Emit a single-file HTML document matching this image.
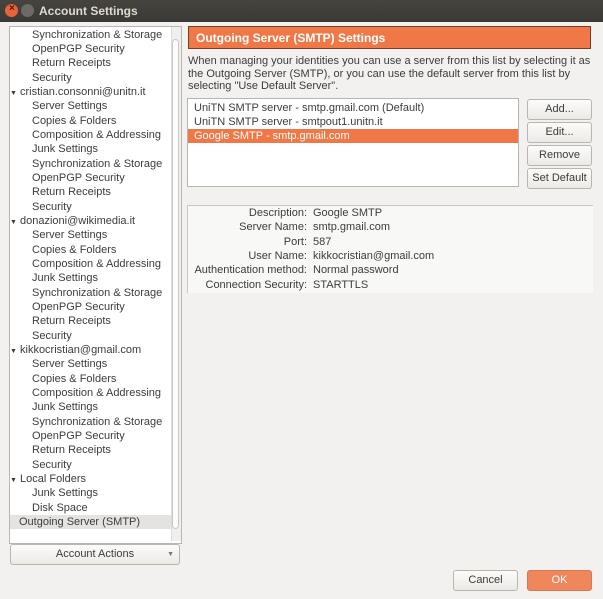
<!DOCTYPE html>
<html><head><style>
body{margin:0;width:603px;height:599px;background:#f2f1f0;font-family:"Liberation Sans",sans-serif;font-size:11px;color:#3c3c3c;position:relative;overflow:hidden}
.a{position:absolute}
#tb{left:0;top:0;width:603px;height:22px;background:linear-gradient(#45443f,#3a3935);color:#dfdbd2;font-weight:bold;font-size:12px}
#tree{left:9px;top:26px;width:171px;height:516px;background:#fff;border:1px solid #b8b6b2;overflow:hidden}
.r{position:absolute;height:14px;line-height:14px;white-space:nowrap}
.btn{position:absolute;border:1px solid #b9b6b0;border-radius:3px;background:linear-gradient(#fbfbfa,#eceae7);text-align:center;line-height:19px;height:19px;color:#3c3c3c}
.dl{position:absolute;right:296px;white-space:nowrap}
.dv{position:absolute;left:313px;white-space:nowrap}
</style></head><body>
<div class="a" id="tb">
<div class="a" style="left:5px;top:4px;width:13px;height:13px;border-radius:50%;background:#e9633a"></div>
<div class="a" style="left:9px;top:3px;color:#4a2010;font-size:10px">×</div>
<div class="a" style="left:21px;top:4px;width:13px;height:13px;border-radius:50%;background:#6b6a65"></div>
<div class="a" style="left:39px;top:4px">Account Settings</div>
</div>
<div class="a" id="tree">
<div class="r" style="left:22px;top:1px">Synchronization &amp; Storage</div>
<div class="r" style="left:22px;top:15px">OpenPGP Security</div>
<div class="r" style="left:22px;top:29px">Return Receipts</div>
<div class="r" style="left:22px;top:44px">Security</div>
<div class="r" style="left:0px;top:58px"><span style="font-size:7px">▼</span> cristian.consonni@unitn.it</div>
<div class="r" style="left:22px;top:72px">Server Settings</div>
<div class="r" style="left:22px;top:87px">Copies &amp; Folders</div>
<div class="r" style="left:22px;top:101px">Composition &amp; Addressing</div>
<div class="r" style="left:22px;top:115px">Junk Settings</div>
<div class="r" style="left:22px;top:130px">Synchronization &amp; Storage</div>
<div class="r" style="left:22px;top:144px">OpenPGP Security</div>
<div class="r" style="left:22px;top:158px">Return Receipts</div>
<div class="r" style="left:22px;top:173px">Security</div>
<div class="r" style="left:0px;top:187px"><span style="font-size:7px">▼</span> donazioni@wikimedia.it</div>
<div class="r" style="left:22px;top:201px">Server Settings</div>
<div class="r" style="left:22px;top:216px">Copies &amp; Folders</div>
<div class="r" style="left:22px;top:230px">Composition &amp; Addressing</div>
<div class="r" style="left:22px;top:244px">Junk Settings</div>
<div class="r" style="left:22px;top:259px">Synchronization &amp; Storage</div>
<div class="r" style="left:22px;top:273px">OpenPGP Security</div>
<div class="r" style="left:22px;top:287px">Return Receipts</div>
<div class="r" style="left:22px;top:302px">Security</div>
<div class="r" style="left:0px;top:316px"><span style="font-size:7px">▼</span> kikkocristian@gmail.com</div>
<div class="r" style="left:22px;top:330px">Server Settings</div>
<div class="r" style="left:22px;top:345px">Copies &amp; Folders</div>
<div class="r" style="left:22px;top:359px">Composition &amp; Addressing</div>
<div class="r" style="left:22px;top:373px">Junk Settings</div>
<div class="r" style="left:22px;top:388px">Synchronization &amp; Storage</div>
<div class="r" style="left:22px;top:402px">OpenPGP Security</div>
<div class="r" style="left:22px;top:416px">Return Receipts</div>
<div class="r" style="left:22px;top:431px">Security</div>
<div class="r" style="left:0px;top:445px"><span style="font-size:7px">▼</span> Local Folders</div>
<div class="r" style="left:22px;top:459px">Junk Settings</div>
<div class="r" style="left:22px;top:474px">Disk Space</div>
<div class="r" style="left:0px;top:488px;width:161px;background:#e4e3e1;padding-left:9px;height:14px">Outgoing Server (SMTP)</div>
<div class="a" style="left:161px;top:0;width:9px;height:514px;background:#f0efee;border-left:1px solid #ddd"></div>
<div class="a" style="left:162px;top:12px;width:7px;height:490px;background:#fcfcfc;border:1px solid #c9c7c3;border-radius:4px;box-sizing:border-box"></div>
</div>
<div class="btn" style="left:10px;top:544px;width:168px">Account Actions<span style="position:absolute;right:5px;font-size:7px;color:#777">▼</span></div>

<div class="a" style="left:188px;top:26px;width:403px;height:23px;background:#f07746;border:1px solid #7a3c22;box-sizing:border-box;color:#fff;font-weight:bold;font-size:12px;line-height:22px;padding-left:7px">Outgoing Server (SMTP) Settings</div>
<div class="a" style="left:188px;top:55px;width:410px;line-height:12.5px">When managing your identities you can use a server from this list by selecting it as the Outgoing Server (SMTP), or you can use the default server from this list by selecting "Use Default Server".</div>
<div class="a" style="left:187px;top:98px;width:332px;height:89px;background:#fff;border:1px solid #b8b6b2;box-sizing:border-box">
<div class="r" style="left:6px;top:2px">UniTN SMTP server - smtp.gmail.com (Default)</div>
<div class="r" style="left:6px;top:16px">UniTN SMTP server - smtpout1.unitn.it</div>
<div class="r" style="left:0;top:30px;width:330px;background:#f07746;color:#fff;padding-left:6px;box-sizing:border-box">Google SMTP - smtp.gmail.com</div>
</div>
<div class="btn" style="left:527px;top:99px;width:63px">Add...</div>
<div class="btn" style="left:527px;top:122px;width:63px">Edit...</div>
<div class="btn" style="left:527px;top:145px;width:63px">Remove</div>
<div class="btn" style="left:527px;top:168px;width:63px">Set Default</div>

<div class="a" style="left:187px;top:205px;width:405px;height:87px;background:#f8f8f7;border-top:1px solid #c8c6c2;border-left:1px solid #c8c6c2"></div>
<div class="dl" style="top:207px">Description:</div><div class="dv" style="top:207px">Google SMTP</div>
<div class="dl" style="top:221px">Server Name:</div><div class="dv" style="top:221px">smtp.gmail.com</div>
<div class="dl" style="top:236px">Port:</div><div class="dv" style="top:236px">587</div>
<div class="dl" style="top:250px">User Name:</div><div class="dv" style="top:250px">kikkocristian@gmail.com</div>
<div class="dl" style="top:264px">Authentication method:</div><div class="dv" style="top:264px">Normal password</div>
<div class="dl" style="top:279px">Connection Security:</div><div class="dv" style="top:279px">STARTTLS</div>

<div class="btn" style="left:453px;top:570px;width:63px">Cancel</div>
<div class="btn" style="left:527px;top:570px;width:63px;background:#f0865c;border-color:#d9774e;color:#fff">OK</div>
</body></html>
